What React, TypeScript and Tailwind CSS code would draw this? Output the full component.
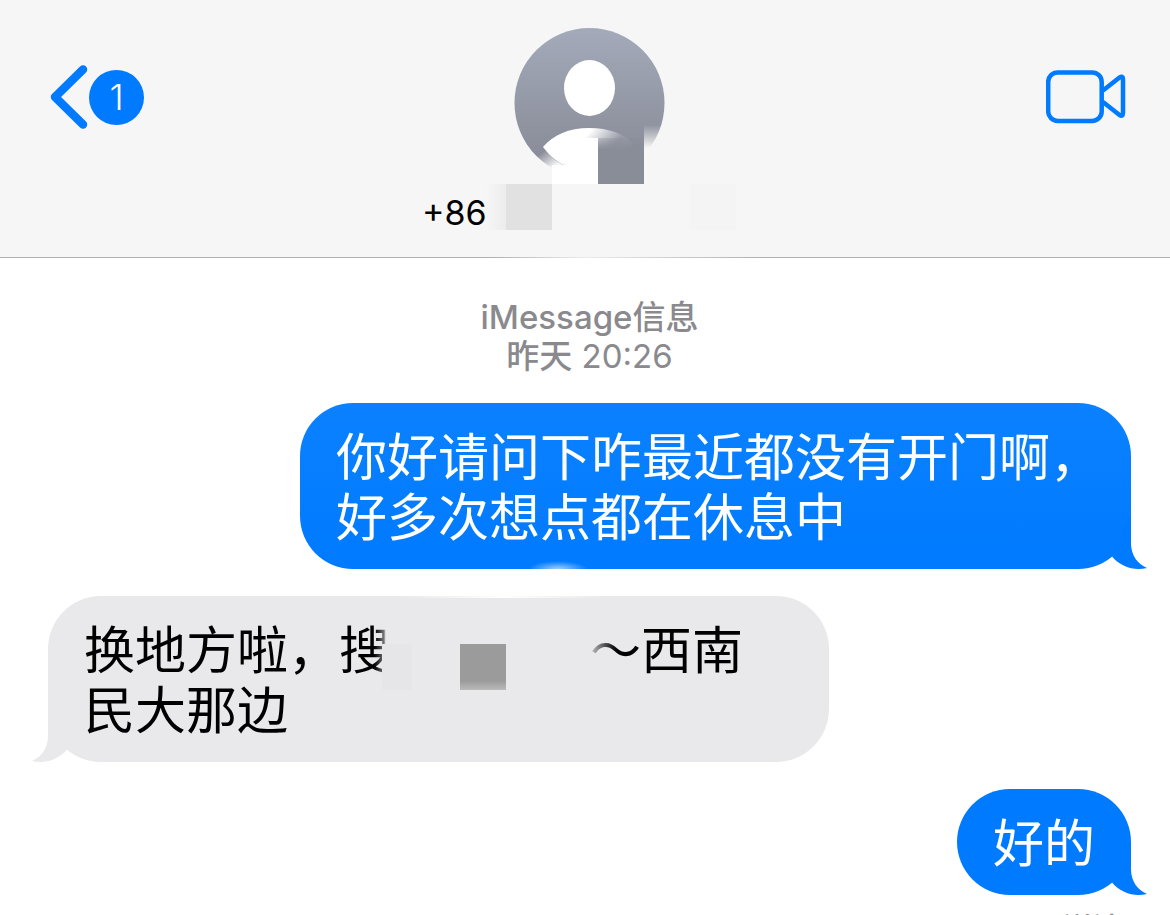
import React from "react";

function BackButton() {
  return (
    <button
      type="button"
      aria-label="返回"
      className="mt-[37px] flex items-center justify-self-start"
    >
      <svg width="39" height="64" viewBox="0 0 39 64" fill="none">
        <path
          d="M33 4.500L5 32L33 59.500"
          stroke="#007aff"
          strokeWidth="8.500"
          strokeLinecap="round"
          strokeLinejoin="round"
        />
      </svg>
      <span className="flex h-[55px] w-[55px] items-center justify-center rounded-full bg-[#007aff] text-[36px] leading-[40px] font-light text-white">
        1
      </span>
    </button>
  );
}

function VideoButton() {
  return (
    <button type="button" aria-label="视频通话" className="mt-[42px] justify-self-end">
      <svg
        width="82"
        height="54"
        viewBox="0 0 82 54"
        fill="none"
        stroke="#007aff"
        strokeWidth="4.500"
        strokeLinejoin="round"
      >
        <rect x="2.200" y="2.400" width="53.500" height="48.500" rx="9.500" />
        <path d="M57 20.500L73.500 7.500Q77 5.500 77 9V43Q77 47 73.500 45L57 32" />
      </svg>
    </button>
  );
}

function Avatar() {
  return (
    <svg width="160" height="156" viewBox="0 0 160 156">
      <defs>
        <linearGradient id="disc" x1="0" y1="0" x2="0" y2="1">
          <stop offset="0" stopColor="#a4aaba" />
          <stop offset="1" stopColor="#858893" />
        </linearGradient>
        <linearGradient id="shoulder" x1="62" y1="92" x2="98" y2="124" gradientUnits="userSpaceOnUse">
          <stop offset="0.45" stopColor="#fff" />
          <stop offset="1" stopColor="#fff" stopOpacity="0.1" />
        </linearGradient>
        <linearGradient id="fadeRight" x1="0" y1="97" x2="0" y2="120" gradientUnits="userSpaceOnUse">
          <stop offset="0" stopColor="#f6f6f6" stopOpacity="0" />
          <stop offset="1" stopColor="#f6f6f6" />
        </linearGradient>
        <linearGradient id="fadeLeft" x1="31" y1="126" x2="42" y2="141" gradientUnits="userSpaceOnUse">
          <stop offset="0" stopColor="#f6f6f6" stopOpacity="0" />
          <stop offset="1" stopColor="#f6f6f6" />
        </linearGradient>
        <linearGradient id="block" x1="0" y1="108" x2="0" y2="122" gradientUnits="userSpaceOnUse">
          <stop offset="0" stopColor="#898d98" stopOpacity="0.2" />
          <stop offset="1" stopColor="#898d98" />
        </linearGradient>
      </defs>
      <circle cx="80.500" cy="75" r="75" fill="url(#disc)" />
      <ellipse cx="80.500" cy="60" rx="25.500" ry="28" fill="#fff" />
      <path
        d="M34 119C44 107 60 100 80 100C100 100 116 106 124 116L89 140H60Q44 133 34 119Z"
        fill="url(#shoulder)"
      />
      <path d="M20 120H34Q44 133 60 140V156H20Z" fill="url(#fadeLeft)" />
      <path d="M50 110H89V156H43V137L58 137L50 132Z" fill="#fff" />
      <rect x="89" y="110" width="46" height="46" fill="url(#block)" />
      <rect x="89" y="122" width="46" height="34" fill="#898d98" />
      <rect x="135" y="95" width="25" height="61" fill="url(#fadeRight)" />
    </svg>
  );
}

function Header() {
  return (
    <header className="bg-[#f6f6f6]">
      <div className="grid grid-cols-[1fr_auto_1fr] items-start pt-7 pr-[42px] pb-[15px] pl-[50px]">
        <BackButton />
        <div className="flex flex-col items-center">
          <Avatar />
          <div className="flex w-[334px] items-start">
            <span className="w-16 text-[34px] leading-[58px] text-black">+86</span>
            <span className="h-[46px] w-5 bg-linear-to-r from-[#f6f6f6] to-[#ececec]" />
            <span className="h-[46px] w-[46px] bg-[#e1e1e1]" />
            <span className="mr-5 ml-auto h-[46px] w-[46px] bg-[#f4f4f4]" />
          </div>
        </div>
        <VideoButton />
      </div>
      <div className="h-px bg-linear-to-r from-[#b0b0b0] from-42% via-[#ececec] via-50% to-[#b0b0b0] to-65%" />
    </header>
  );
}

type BubbleProps = {
  side: "left" | "right";
  className: string;
  tail: string;
  children: React.ReactNode;
};

function Bubble({ side, className, tail, children }: BubbleProps) {
  return (
    <div
      className={`relative mt-[27px] rounded-[53px] px-9 pt-[25px] pb-[21px] text-[51px] leading-[60px] whitespace-nowrap ${
        side === "right" ? "self-end text-white" : "self-start text-black"
      } ${className}`}
    >
      {children}
      <svg
        width="44"
        height="54"
        viewBox="0 0 44 54"
        className={`absolute bottom-0 ${side === "right" ? "-right-4" : "-left-4 -scale-x-100"}`}
      >
        <path d="M28 0V28C28 41 35 49 44 53C31 56 18 52 9 41.500Z" fill={tail} />
      </svg>
    </div>
  );
}

export default function App() {
  return (
    <div className="h-screen overflow-hidden bg-white font-[Inter,'Noto_Sans_CJK_SC',sans-serif]">
      <Header />

      <main className="flex flex-col pt-10 pr-[39px] pl-12">
        <div className="text-center text-[33px] leading-[39px] text-[#8a8a8e]">
          <p className="font-medium">iMessage信息</p>
          <p>
            <span className="font-medium">昨天</span> 20:26
          </p>
        </div>

        <Bubble
          side="right"
          tail="#007aff"
          className="max-w-[831px] bg-linear-to-b from-[#0b81ff] to-[#007aff]"
        >
          <p>
            你好请问下咋最近都没有开门啊，
            <br />
            好多次想点都在休息中
          </p>
          <span className="absolute bottom-0 left-[228px] h-2 w-[60px] bg-[radial-gradient(ellipse_at_bottom,#9fceff,transparent_70%)]" />
        </Bubble>

        <Bubble side="left" tail="#e9e9eb" className="w-[781px] bg-[#e9e9eb]">
          <p>
            换地方啦，
            <span className="bg-linear-to-r from-black from-65% via-[#777] via-88% to-transparent to-92% bg-clip-text text-transparent">
              搜
            </span>
            {/* Hidden shop name */}
            <span className="relative inline-block h-[60px] w-[200px] align-top">
              <span className="absolute top-[23px] -left-2 h-[46px] w-[30px] bg-[#e6e6e8]" />
              <span className="absolute top-[23px] left-[70px] h-[46px] w-[46px] bg-linear-to-b from-[#9b9b9c] from-80% to-[#bababb]" />
            </span>
            <span className="bg-linear-to-r from-[#ccc] to-black to-60% bg-clip-text text-transparent">
              ～
            </span>
            西南
            <br />
            民大那边
          </p>
          <span className="absolute top-0 left-[350px] h-0.5 w-[210px] bg-linear-to-r from-transparent via-white to-transparent" />
        </Bubble>

        <Bubble side="right" tail="#007aff" className="bg-[#007aff]">
          <p>好的</p>
        </Bubble>

        <p className="mt-[13px] mr-2 self-end text-[30px] leading-[40px] font-medium text-[#8a8a8e]">
          已送达
        </p>
      </main>
    </div>
  );
}
